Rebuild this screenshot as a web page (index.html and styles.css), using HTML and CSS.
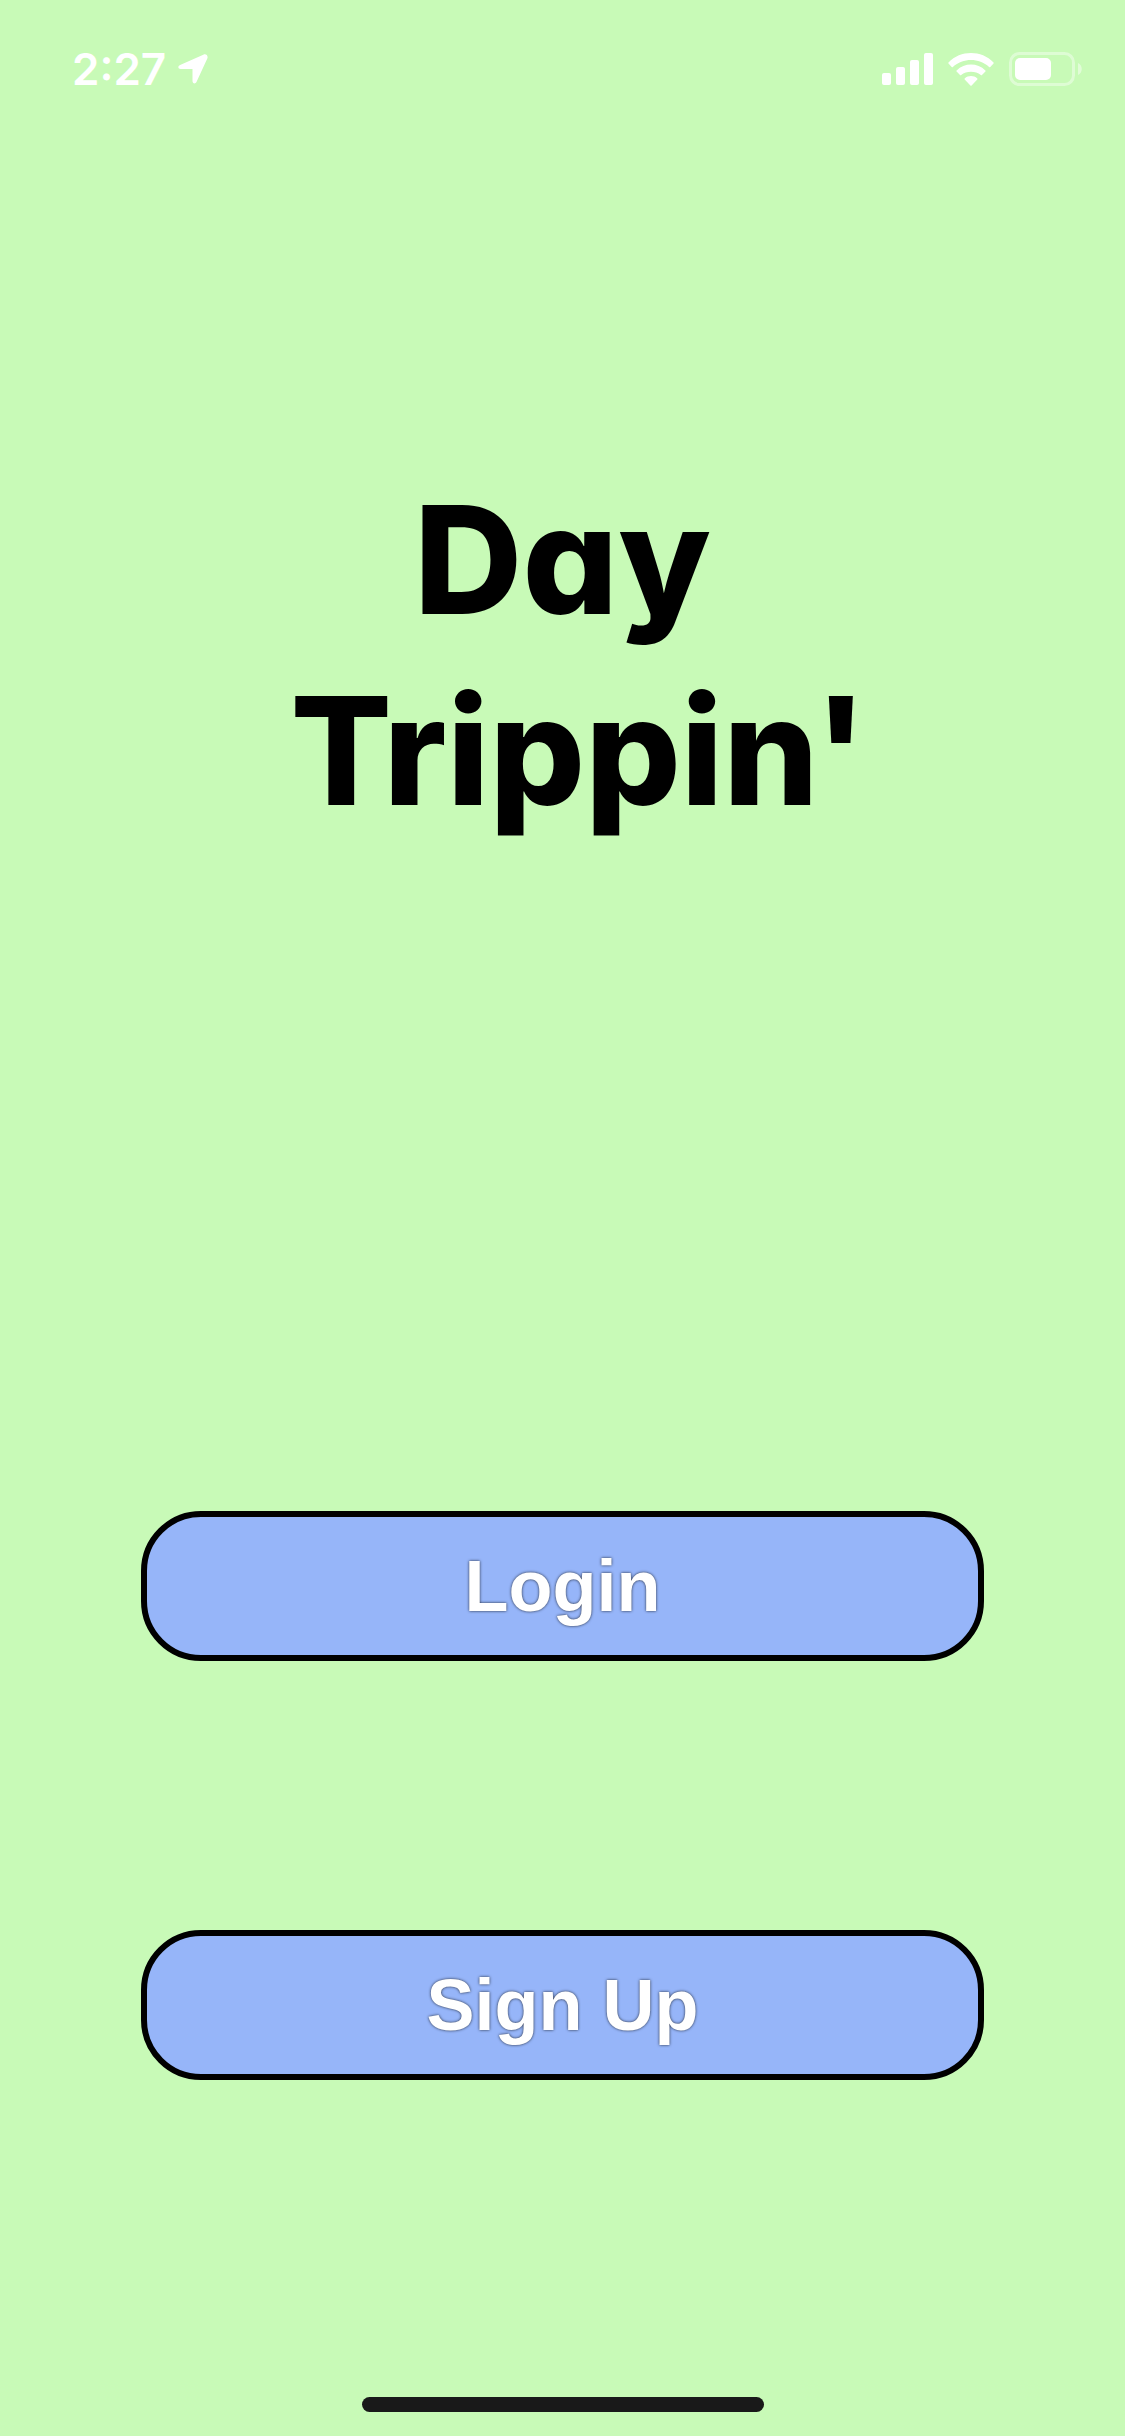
FILE: index.html
```html
<!DOCTYPE html>
<html lang="en">
<head>
<meta charset="utf-8">
<meta name="viewport" content="width=device-width, initial-scale=1">
<title>Day Trippin'</title>
<link rel="stylesheet" href="styles.css">
</head>
<body>
<header class="status">
  <div class="status-group status-time">
    <span>2:27</span>
    <svg width="30" height="30" viewBox="0 0 30 30" aria-hidden="true"><path d="M25.300.7 2.100 11.100C-.6 12.400.1 14.900 2.600 14.900H14.500V27C14.500 29.900 17.500 30.200 18.600 27.800L29.300 4.600C30.400 1.800 28.200-.5 25.300.7Z"/></svg>
  </div>
  <div class="status-group">
    <svg width="51" height="32" viewBox="0 0 51 32" aria-hidden="true"><rect y="20" width="9" height="12" rx="2"/><rect x="14" y="14" width="9" height="18" rx="2"/><rect x="28" y="7" width="9" height="25" rx="2"/><rect x="42" width="9" height="32" rx="2"/></svg>
    <svg width="46" height="33" viewBox="0 0 46 33" aria-hidden="true"><path d="M.5 9.400C12.500-3.100 33.500-3.100 45.500 9.400Q46 10 45.500 10.600L42.300 13.900Q41.700 14.500 41.100 13.900C31 4.700 15 4.700 4.900 13.900Q4.300 14.500 3.700 13.900L.5 10.600Q0 10 .5 9.400Z"/><path d="M8.600 17.400C16.500 9.500 29.500 9.500 37.400 17.400Q38 18 37.400 18.600L34 22Q33.400 22.600 32.800 22C27.500 17.600 18.500 17.600 13.200 22Q12.600 22.600 12 22L8.600 18.600Q8 18 8.600 17.400Z"/><path d="M16.700 25.400C20.200 22.300 25.800 22.300 29.300 25.400Q29.900 26 29.300 26.600L23.600 32.400Q23 33 22.400 32.400L16.700 26.600Q16.100 26 16.700 25.400Z"/></svg>
    <svg width="73" height="34" viewBox="0 0 73 34" aria-hidden="true"><rect class="battery-case" x="1.500" y="1.500" width="63" height="31" rx="9"/><path class="battery-tip" d="M69 11C74 13 74 21 69 23Z"/><rect x="6" y="6" width="36" height="22" rx="5"/></svg>
  </div>
</header>
<main class="welcome">
  <h1 class="title">Day
 Trippin'</h1>
  <div class="actions">
    <button class="action" type="button">Login</button>
    <button class="action" type="button">Sign Up</button>
  </div>
</main>
<div class="home-bar"></div>
</body>
</html>
```
FILE: styles.css
```css
* {
  box-sizing: border-box;
}

body {
  display: flex;
  flex-direction: column;
  min-height: 100vh;
  margin: 0;
  background: #c8fab7;
  font-family: "Liberation Sans", Arial, sans-serif;
}

.status {
  display: flex;
  justify-content: space-between;
  align-items: center;
  height: 138px;
  padding: 0 43px 0 72px;
  color: #fff;
  font: 600 44px/44px Inter, sans-serif;
}

.status-group {
  display: flex;
  align-items: center;
  gap: 15px;
}

.status-time {
  gap: 12px;
}

.status svg {
  fill: #fff;
}

.status .battery-case {
  fill: none;
  stroke: #fff;
  stroke-width: 3;
  opacity: 0.4;
}

.battery-tip {
  opacity: 0.45;
}

.welcome {
  display: flex;
  flex: 1;
  flex-direction: column;
  align-items: center;
  padding-top: 326px;
}

.title {
  margin: 0;
  color: #000;
  font: 800 150px/191px Inter, sans-serif;
  font-feature-settings: "cv11";
  text-align: center;
  white-space: pre;
}

.actions {
  display: flex;
  flex-direction: column;
  gap: 269px;
  width: 75%;
  margin-top: 665px;
}

.action {
  height: 150px;
  border: 6px solid #000;
  border-radius: 60px;
  background: #96b5f9;
  color: #fff;
  font: 700 72px/80px "Liberation Sans", Arial, sans-serif;
  text-shadow: 0 0 3px #000c;
}

.home-bar {
  align-self: center;
  width: 402px;
  height: 15px;
  margin-bottom: 24px;
  border-radius: 8px;
  background: #191919;
}
```
